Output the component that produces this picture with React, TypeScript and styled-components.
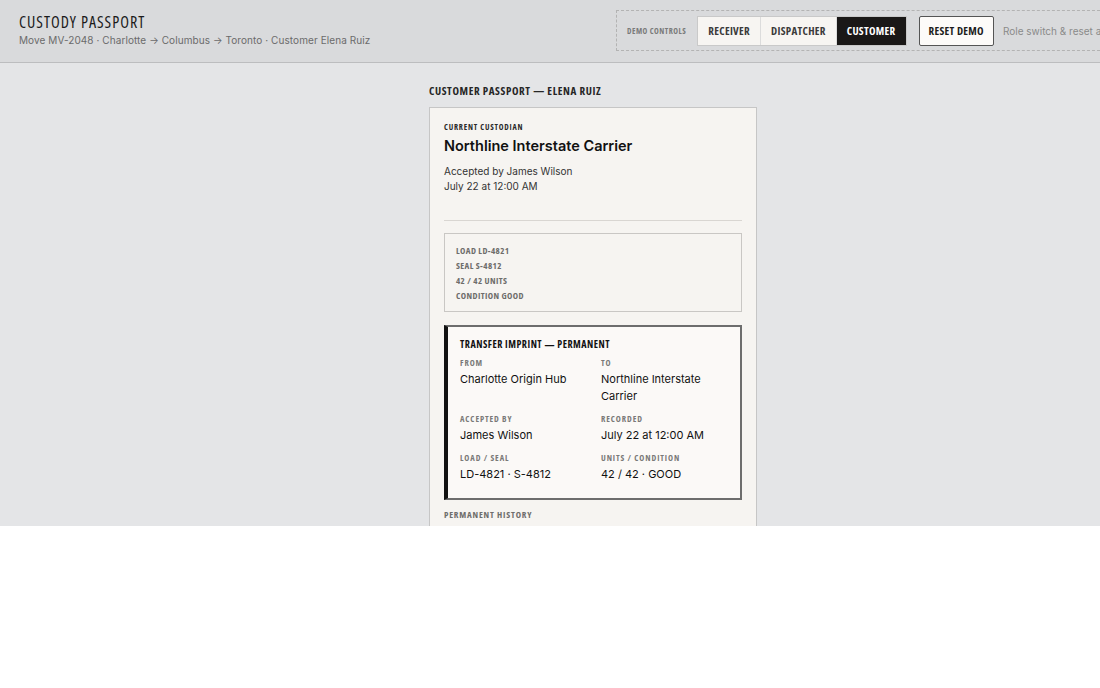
import styled, { createGlobalStyle } from 'styled-components';

const GlobalStyle = createGlobalStyle`
  html, body {
    margin: 0;
    padding: 0;
    background: #ffffff;
    overflow: hidden;
  }
  * {
    box-sizing: border-box;
  }
`;

const condensed = `"Open Sans", "Liberation Sans Narrow", sans-serif`;
const sans = `Inter, "Noto Sans", sans-serif`;

interface RoleProps {
  $active: boolean;
}

const roles = [
  { id: 'receiver', label: 'RECEIVER', active: false },
  { id: 'dispatcher', label: 'DISPATCHER', active: false },
  { id: 'customer', label: 'CUSTOMER', active: true }
];

const loadLines = ['LOAD LD-4821', 'SEAL S-4812', '42 / 42 UNITS', 'CONDITION GOOD'];

const imprintFields = [
  { label: 'FROM', value: 'Charlotte Origin Hub' },
  { label: 'TO', value: 'Northline Interstate Carrier' },
  { label: 'ACCEPTED BY', value: 'James Wilson' },
  { label: 'RECORDED', value: 'July 22 at 12:00 AM' },
  { label: 'LOAD / SEAL', value: 'LD-4821 · S-4812' },
  { label: 'UNITS / CONDITION', value: '42 / 42 · GOOD' }
];

export default function App() {
  return (
    <>
      <GlobalStyle />
      <Page>
        <Header>
          <Brand>
            <BrandTitle>CUSTODY PASSPORT</BrandTitle>
            <BrandSub>Move MV-2048 · Charlotte → Columbus → Toronto · Customer Elena Ruiz</BrandSub>
          </Brand>
          <DemoControls>
            <DemoLabel>DEMO CONTROLS</DemoLabel>
            <RoleGroup>
              {roles.map((role) => (
                <RoleButton key={role.id} $active={role.active}>
                  {role.label}
                </RoleButton>
              ))}
            </RoleGroup>
            <ResetButton>RESET DEMO</ResetButton>
            <DemoNote>Role switch &amp; reset are demo-only controls</DemoNote>
          </DemoControls>
        </Header>
        <Main>
          <Column>
            <SectionTitle>CUSTOMER PASSPORT — ELENA RUIZ</SectionTitle>
            <Card>
              <Eyebrow>CURRENT CUSTODIAN</Eyebrow>
              <Custodian>Northline Interstate Carrier</Custodian>
              <Meta>
                Accepted by James Wilson
                <br />
                July 22 at 12:00 AM
              </Meta>
              <Divider />
              <LoadBox>
                {loadLines.map((line) => (
                  <LoadLine key={line}>{line}</LoadLine>
                ))}
              </LoadBox>
              <Imprint>
                <ImprintTitle>TRANSFER IMPRINT — PERMANENT</ImprintTitle>
                <ImprintGrid>
                  {imprintFields.map((field) => (
                    <Field key={field.label}>
                      <FieldLabel>{field.label}</FieldLabel>
                      <FieldValue>{field.value}</FieldValue>
                    </Field>
                  ))}
                </ImprintGrid>
              </Imprint>
              <HistoryTitle>PERMANENT HISTORY</HistoryTitle>
            </Card>
          </Column>
        </Main>
      </Page>
    </>
  );
}

const Page = styled.div`
  height: 526px;
  overflow: hidden;
  display: flex;
  flex-direction: column;
  background: #e4e5e7;
`;

const Header = styled.header`
  height: 63px;
  flex-shrink: 0;
  display: flex;
  align-items: center;
  justify-content: space-between;
  padding: 0 0 0 19px;
  background: #d9dadc;
  border-bottom: 1px solid #bcbdbf;
  white-space: nowrap;
`;

const Brand = styled.div`
  display: flex;
  flex-direction: column;
  gap: 2px;
  margin-top: -2px;
`;

const BrandTitle = styled.div`
  font-family: ${condensed};
  font-stretch: 75%;
  font-size: 16px;
  font-weight: 500;
  letter-spacing: 1px;
  color: #1b1b1b;
  line-height: 18px;
`;

const BrandSub = styled.div`
  font-family: ${sans};
  font-size: 10px;
  letter-spacing: 0.08px;
  color: #6b6b6b;
  line-height: 14px;
`;

const DemoControls = styled.div`
  display: flex;
  align-items: center;
  flex-shrink: 0;
  width: 484px;
  height: 41px;
  margin-top: -1px;
  padding: 0 0 0 10px;
  border: 1px dashed #b3b3b3;
  border-right: none;
  overflow: hidden;
`;

const DemoLabel = styled.span`
  font-family: ${condensed};
  font-stretch: 75%;
  font-size: 8px;
  font-weight: 700;
  letter-spacing: 0.5px;
  color: #7a7a7a;
  margin-right: 11px;
`;

const RoleGroup = styled.div`
  display: flex;
  border: 1px solid #c9c9c9;
`;

const RoleButton = styled.button<RoleProps>`
  height: 28px;
  padding: 0 10px;
  border: none;
  border-left: 1px solid #dcdcdc;
  font-family: ${condensed};
  font-stretch: 75%;
  font-size: 11px;
  font-weight: 700;
  letter-spacing: 0.3px;
  color: ${(props) => (props.$active ? '#ffffff' : '#3b3b3b')};
  background: ${(props) => (props.$active ? '#1a1817' : '#f7f5f2')};
  cursor: pointer;

  &:first-child {
    border-left: none;
  }
`;

const ResetButton = styled.button`
  height: 30px;
  margin-left: 12px;
  padding: 0 9px;
  border: 1px solid #555555;
  border-radius: 2px;
  background: #fdfbf9;
  font-family: ${condensed};
  font-stretch: 75%;
  font-size: 11px;
  font-weight: 700;
  letter-spacing: 0.3px;
  color: #1d1d1d;
  cursor: pointer;
`;

const DemoNote = styled.span`
  margin-left: 9px;
  font-family: ${sans};
  font-size: 10px;
  color: #8a8a8a;
`;

const Main = styled.main`
  flex: 1;
  display: flex;
  justify-content: center;
  padding: 21px 0 0 86px;
  background: #e4e5e7;
`;

const Column = styled.div`
  width: 328px;
  display: flex;
  flex-direction: column;
`;

const SectionTitle = styled.div`
  font-family: ${condensed};
  font-stretch: 75%;
  font-size: 11px;
  font-weight: 700;
  letter-spacing: 0.6px;
  color: #262626;
  line-height: 14px;
  margin-bottom: 9px;
`;

const Card = styled.section`
  background: #f6f4f1;
  border: 1px solid #c6c6c6;
  padding: 14px 14px 20px;
`;

const Eyebrow = styled.div`
  font-family: ${condensed};
  font-stretch: 75%;
  font-size: 8px;
  font-weight: 700;
  letter-spacing: 0.8px;
  color: #2a2a2a;
  line-height: 10px;
`;

const Custodian = styled.div`
  font-family: ${sans};
  font-size: 14.5px;
  font-weight: 600;
  color: #111111;
  line-height: 20px;
  margin-top: 4px;
`;

const Meta = styled.div`
  font-family: ${sans};
  font-size: 10px;
  color: #333333;
  line-height: 15px;
  margin-top: 8px;
`;

const Divider = styled.hr`
  border: none;
  border-top: 1px solid #d9d6d2;
  margin: 26px 0 12px;
`;

const LoadBox = styled.div`
  border: 1px solid #c9c7c4;
  padding: 9px 11px 8px;
  display: flex;
  flex-direction: column;
`;

const LoadLine = styled.div`
  font-family: ${condensed};
  font-stretch: 75%;
  font-size: 9px;
  font-weight: 700;
  letter-spacing: 0.4px;
  color: #6e6d6b;
  line-height: 15px;
`;

const Imprint = styled.div`
  margin-top: 13px;
  background: #fbf9f7;
  border: 2px solid #6d6d6d;
  border-left: 4px solid #111111;
  padding: 11px 12px 15px;
`;

const ImprintTitle = styled.div`
  font-family: ${condensed};
  font-stretch: 75%;
  font-size: 10px;
  font-weight: 700;
  letter-spacing: 0.5px;
  color: #111111;
  line-height: 13px;
`;

const ImprintGrid = styled.div`
  display: grid;
  grid-template-columns: 1fr 1fr;
  column-gap: 14px;
  row-gap: 8px;
  margin-top: 6px;
`;

const Field = styled.div`
  display: flex;
  flex-direction: column;
  gap: 2px;
`;

const FieldLabel = styled.div`
  font-family: ${condensed};
  font-stretch: 75%;
  font-size: 8.5px;
  font-weight: 700;
  letter-spacing: 0.9px;
  color: #7a7978;
  line-height: 12px;
`;

const FieldValue = styled.div`
  font-family: ${sans};
  font-size: 11px;
  color: #111111;
  line-height: 17px;
`;

const HistoryTitle = styled.div`
  font-family: ${condensed};
  font-stretch: 75%;
  font-size: 9px;
  font-weight: 700;
  letter-spacing: 0.8px;
  color: #6e6d6b;
  line-height: 12px;
  margin-top: 9px;
`;
